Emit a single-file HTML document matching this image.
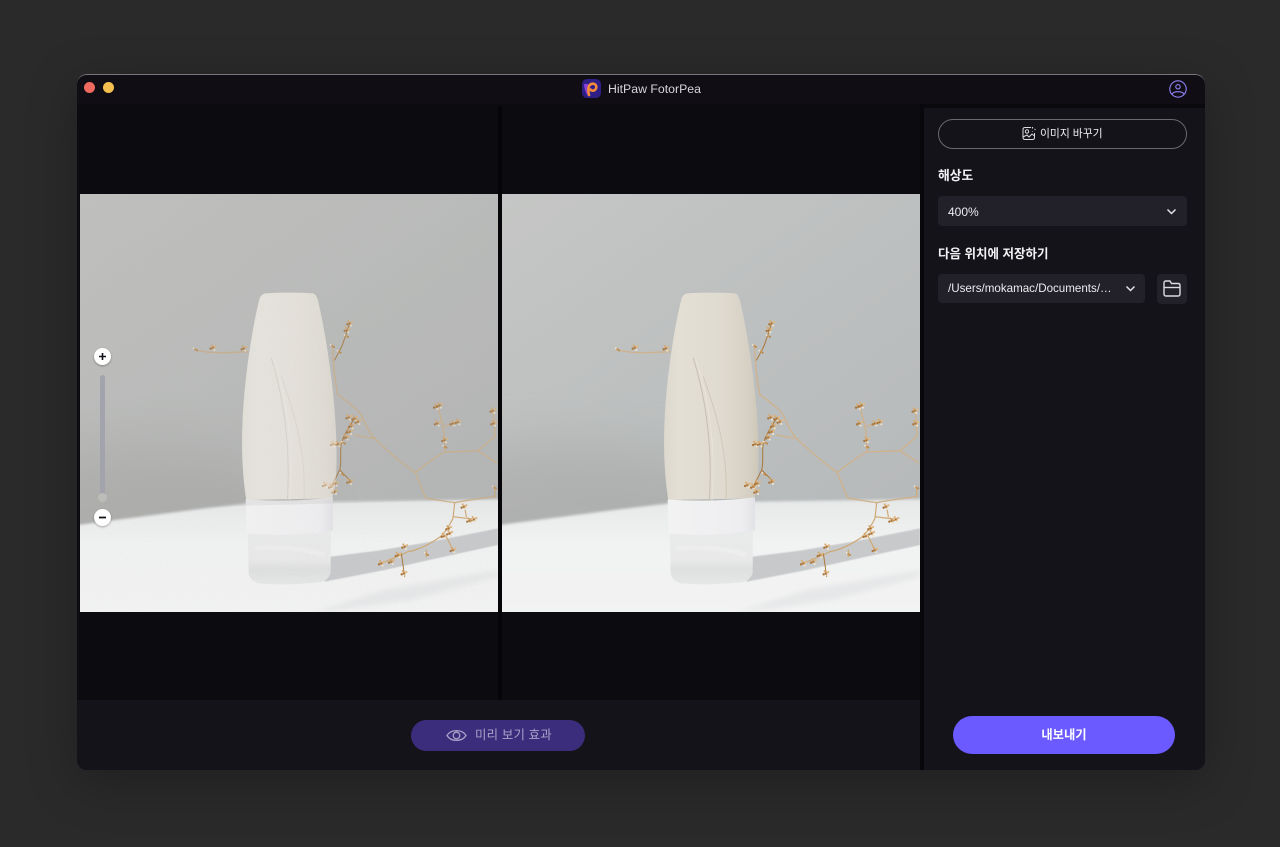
<!DOCTYPE html>
<html lang="ko"><head><meta charset="utf-8"><title>HitPaw FotorPea</title>
<style>
*{box-sizing:border-box}
html,body{margin:0;width:1280px;height:847px;overflow:hidden;background:#2a2a2a;font-family:"Liberation Sans","Noto Sans CJK KR",sans-serif}
.a{position:absolute}
#win{left:77px;top:74px;width:1128px;height:696px;border-radius:10px;background:#100e14;box-shadow:0 12px 50px rgba(0,0,0,.25);overflow:hidden}
#edge{left:77px;top:74px;width:1128px;height:12px;border-radius:10px 10px 0 0;border-top:1px solid #77767a}
.t{color:#fff;white-space:nowrap;line-height:1}
.box{background:#22212a;border-radius:4px}
</style></head><body>
<div class="a" id="win"></div><div class="a" id="edge"></div>
<div class="a" style="left:77px;top:104px;width:1128px;height:4px;background:#09090e"></div>
<div class="a" style="left:77px;top:104px;width:843px;height:596px;background:#0b0b10"></div>
<div class="a" style="left:498px;top:106px;width:4px;height:594px;background:#060609"></div>
<div class="a" style="left:77px;top:700px;width:843px;height:70px;background:#14131a;border-radius:0 0 0 10px"></div>
<div class="a" style="left:920px;top:104px;width:4px;height:666px;background:#08080c"></div>
<div class="a" style="left:924px;top:108px;width:281px;height:662px;background:#14131a;border-radius:0 0 10px 0"></div>
<div class="a" style="left:84px;top:82px;width:11px;height:11px;border-radius:50%;background:#ee6a5f"></div>
<div class="a" style="left:103px;top:82px;width:11px;height:11px;border-radius:50%;background:#f5bf4f"></div>
<svg class="a" style="left:582px;top:79px" width="19" height="19" viewBox="0 0 19 19"><rect width="19" height="19" rx="5" fill="#2e1f86"/><path d="M2 5Q2 11 6 17L8 16Q5 10 6 5Z" fill="#8a3fd8"/><path d="M7 16C5.500 9 6.500 5 10.800 4.700C15 4.700 15.500 10 11.800 11.500C10.300 12 9 11.500 8.500 10.500" fill="none" stroke="#f58a3a" stroke-width="2.600" stroke-linecap="round"/></svg>
<div class="a t" style="left:608px;top:83px;font-size:12.300px;color:#d7d6dc">HitPaw FotorPea</div>
<svg class="a" style="left:1169px;top:80px" width="18" height="18" viewBox="0 0 18 18" fill="none" stroke="#8f83f5" stroke-width="1.100"><circle cx="9" cy="9" r="8.200"/><circle cx="9" cy="6.800" r="2.200"/><path d="M3 14.500C3.500 10.800 14.500 10.800 15 14.500"/></svg>

<svg width="0" height="0" style="position:absolute"><defs>
<linearGradient id="wall" x1="0" y1="0" x2=".7" y2="1"><stop offset="0" stop-color="#c5c6c5"/><stop offset=".55" stop-color="#bcbfbf"/><stop offset="1" stop-color="#b6b9ba"/></linearGradient>
<linearGradient id="table" x1="0" y1="0" x2="0" y2="1"><stop offset="0" stop-color="#e6e7e7"/><stop offset=".35" stop-color="#f1f2f2"/><stop offset="1" stop-color="#f3f3f3"/></linearGradient>
<linearGradient id="bottle" x1="0" y1="0" x2="1" y2="0"><stop offset="0" stop-color="#dcd8cd"/><stop offset=".15" stop-color="#e3dfd5"/><stop offset=".6" stop-color="#e0dbd0"/><stop offset=".9" stop-color="#d6d0c4"/><stop offset="1" stop-color="#cdc7ba"/></linearGradient>
<linearGradient id="band" x1="0" y1="0" x2="1" y2="0"><stop offset="0" stop-color="#f2f2f3"/><stop offset=".85" stop-color="#eeeef0"/><stop offset="1" stop-color="#e2e2e6"/></linearGradient>
<linearGradient id="base" x1="0" y1="0" x2="0" y2="1"><stop offset="0" stop-color="#e9eaea"/><stop offset=".55" stop-color="#e8e9e8"/><stop offset=".72" stop-color="#dedfdf"/><stop offset="1" stop-color="#e6e7e7"/></linearGradient>
<filter id="b1" x="-10%" y="-10%" width="120%" height="120%"><feGaussianBlur stdDeviation="1.200"/></filter>
<filter id="b2" x="-20%" y="-20%" width="140%" height="140%"><feGaussianBlur stdDeviation="2.500"/></filter>
<filter id="b8" x="-30%" y="-30%" width="160%" height="160%"><feGaussianBlur stdDeviation="8"/></filter>
<filter id="b25" x="-50%" y="-50%" width="200%" height="200%"><feGaussianBlur stdDeviation="28"/></filter>
<filter id="grain" x="0" y="0" width="100%" height="100%"><feTurbulence type="fractalNoise" baseFrequency=".8" numOctaves="2" seed="3"/><feColorMatrix values="0 0 0 0 .4  0 0 0 0 .4  0 0 0 0 .38  .4 0 0 0 -.12"/></filter>
<clipPath id="wc"><rect width="418" height="418"/></clipPath>
<g id="k"><circle r="4.500" fill="#c9965a"/><circle cx="7" cy="-4" r="3.500" fill="#e0b984"/><circle cx="-7" cy="3" r="3.500" fill="#a9753a"/><circle cx="4" cy="7" r="3.200" fill="#efe3cd"/><circle cx="-4" cy="-7" r="3" fill="#d9a96c"/><circle cx="-1" cy="1" r="1.500" fill="#7c5528"/></g>
<g id="m"><circle r="3.500" fill="#c9965a"/><circle cx="-5" cy="-3" r="2.600" fill="#f2e8d6"/><circle cx="5" cy="3" r="3" fill="#b98644"/></g>
<path id="bp" d="M262 40Q330 36 405 40Q415 42 420 62C445 170 470 330 475 480C477 560 475 620 462 655L205 660C195 600 190 520 193 440C197 300 225 130 245 55Q250 42 262 40Z"/>
<g id="scene" clip-path="url(#wc)">
<rect width="418" height="418" fill="url(#wall)"/>
<ellipse cx="60" cy="320" rx="170" ry="70" fill="#9d9d9b" opacity=".42" filter="url(#b25)"/>
<path d="M-10 332L120 315L170 309L430 305V430H-10Z" fill="url(#table)" filter="url(#b1)"/>
<g transform="translate(98 86) scale(.33333)">
<path d="M440 832L600 812L760 785L960 745V795L800 830L620 870L440 905Z" fill="#c8c9cb" filter="url(#b1)"/>
<path d="M620 930L960 870V890L700 960L400 1000Z" fill="#e6e7e8" filter="url(#b8)"/>
<use href="#bp" fill="url(#bottle)"/>
<g fill="none" stroke-linecap="round">
<path d="M280 235C310 330 340 480 328 660" stroke="#c6c0b1" stroke-width="3"/>
<path d="M310 290C350 400 385 520 378 660" stroke="#cfc9bb" stroke-width="3"/>
<path d="M288 240C320 335 350 480 336 660" stroke="#e9e5dc" stroke-width="2.500"/>
</g>
<path d="M203 658Q330 668 465 652V752Q330 772 206 760Z" fill="url(#band)"/>
<path d="M210 760Q330 772 459 752L458 880Q450 900 430 906Q330 918 240 910Q215 900 212 880Z" fill="url(#base)"/>
<path d="M230 805Q340 795 440 825" stroke="#f4f4f4" stroke-width="14" fill="none" opacity=".4" filter="url(#b2)"/>
<g fill="none" stroke-linecap="round" stroke-linejoin="round">
<path d="M48 208C90 222 150 218 210 215M464 195C465 250 470 300 480 345C510 365 535 385 550 405C565 440 575 460 590 475C630 515 680 555 712 578C725 610 735 640 745 655C780 660 805 665 830 668C870 660 910 655 950 650M530 465L585 475M712 578C745 550 775 530 800 515C840 515 870 514 900 512C920 495 935 482 950 470M900 512L955 548M800 515C802 490 800 465 795 440L780 380M795 440L840 428M945 395C950 420 950 450 950 470" stroke="#cfb28c" stroke-width="4"/>
<path d="M830 668L825 715C810 745 795 765 780 775C750 795 720 810 690 815C660 830 630 842 605 852M825 710L890 718M860 680L865 710M805 770L825 810M745 810V830M950 625V650" stroke="#cda873" stroke-width="3.500"/>
<path d="M470 240C480 220 490 205 495 190L515 130M530 415C510 445 495 470 490 490C485 520 492 545 485 570L460 620M485 570L520 605M670 820L680 890" stroke="#a9783a" stroke-width="3"/>
</g>
<use href="#m" x="52" y="208"/><use href="#k" x="105" y="203"/><use href="#k" x="198" y="205"/>
<use href="#k" x="515" y="130"/><use href="#k" x="507" y="150"/><use href="#m" x="505" y="168"/><use href="#m" x="463" y="198"/><use href="#m" x="483" y="215"/>
<use href="#k" x="530" y="415"/><use href="#k" x="512" y="412"/><use href="#k" x="540" y="425"/><use href="#k" x="520" y="438"/><use href="#k" x="515" y="455"/><use href="#k" x="505" y="472"/><use href="#k" x="480" y="492"/><use href="#k" x="466" y="492"/><use href="#m" x="496" y="488"/><use href="#k" x="460" y="620"/><use href="#k" x="442" y="615"/><use href="#k" x="470" y="635"/><use href="#k" x="472" y="610"/><use href="#k" x="515" y="605"/><use href="#m" x="492" y="582"/>
<use href="#k" x="775" y="380"/><use href="#k" x="785" y="376"/><use href="#k" x="778" y="430"/><use href="#k" x="825" y="430"/><use href="#k" x="840" y="426"/><use href="#k" x="800" y="480"/><use href="#m" x="800" y="500"/><use href="#k" x="945" y="392"/><use href="#k" x="947" y="430"/><use href="#m" x="949" y="622"/>
<use href="#k" x="858" y="680"/><use href="#k" x="888" y="718"/><use href="#k" x="875" y="722"/><use href="#k" x="812" y="745"/><use href="#k" x="798" y="768"/><use href="#k" x="815" y="760"/><use href="#k" x="825" y="810"/><use href="#k" x="680" y="800"/><use href="#k" x="660" y="825"/><use href="#k" x="640" y="845"/><use href="#k" x="610" y="850"/><use href="#k" x="678" y="880"/><use href="#m" x="745" y="822"/>
</g>
</g>
</defs></svg>

<svg class="a" style="left:80px;top:194px" width="418" height="418" viewBox="0 0 418 418"><use href="#scene"/><path d="M0 0H418V305L120 313L0 330Z" fill="#a7a49c" opacity=".16"/><g transform="translate(98 86) scale(.33333)"><use href="#bp" fill="#fff" opacity=".35"/></g><rect width="418" height="418" filter="url(#grain)" opacity=".35"/></svg>
<svg class="a" style="left:502px;top:194px" width="418" height="418" viewBox="0 0 418 418"><use href="#scene"/></svg>

<div class="a" style="left:100px;top:375px;width:5px;height:125px;background:#a3a3ad;border-radius:3px"></div>
<div class="a" style="left:98px;top:493px;width:9px;height:9px;background:#bcbcb8;border-radius:50%"></div>
<div class="a" style="left:94px;top:348px;width:17px;height:17px;background:#fff;border-radius:50%;box-shadow:0 1px 2px rgba(0,0,0,.3)"></div>
<svg class="a" style="left:94px;top:348px" width="17" height="17"><path d="M5 8.500H12M8.500 5V12" stroke="#15141a" stroke-width="1.600"/></svg>
<div class="a" style="left:94px;top:509px;width:17px;height:17px;background:#fff;border-radius:50%;box-shadow:0 1px 2px rgba(0,0,0,.3)"></div>
<svg class="a" style="left:94px;top:509px" width="17" height="17"><path d="M5 8.500H12" stroke="#15141a" stroke-width="1.800"/></svg>

<div class="a" style="left:411px;top:720px;width:174px;height:31px;border-radius:16px;background:#3b2c7c"></div>
<svg class="a" style="left:446px;top:727px" width="21" height="17" viewBox="0 0 21 17" fill="none" stroke="#a9a3c9" stroke-width="1.300"><path d="M1 8.500C5 2 16 2 20 8.500C16 15 5 15 1 8.500Z"/><circle cx="10.500" cy="8.500" r="3.300"/></svg>
<div class="a t" style="left:475px;top:729px;font-size:12.400px;color:#a9a3c9;letter-spacing:.2px">미리 보기 효과</div>

<div class="a" style="left:938px;top:119px;width:249px;height:30px;border:1px solid #6a696f;border-radius:15px"></div>
<svg class="a" style="left:1022px;top:126px" width="14" height="15" viewBox="0 0 14 15" fill="none" stroke="#dddce0" stroke-width="1"><path d="M9 1.500H3Q1 1.500 1 3.500V11.500Q1 13.500 3 13.500H10.500Q12.500 13.500 12.500 11.500V7"/><circle cx="5" cy="5.500" r="1.700"/><path d="M1 11L5 9L7 11L10 8L12.500 10"/><path d="M10.500 1V2.500M12.500 3.500H13.500M10.500 5V5.500" stroke-width="1.200"/></svg>
<div class="a t" style="left:1040px;top:129px;font-size:10.800px;color:#f0f0f2">이미지 바꾸기</div>
<div class="a t" style="left:938px;top:170px;font-size:12.800px;font-weight:700;color:#f3f3f5">해상도</div>
<div class="a box" style="left:938px;top:196px;width:249px;height:30px"></div>
<div class="a t" style="left:948px;top:206px;font-size:12px;color:#ecebef">400%</div>
<svg class="a" style="left:1166px;top:208px" width="11" height="8" fill="none" stroke="#e3e2e6" stroke-width="1.500"><path d="M1.500 1.500L5.500 5.500L9.500 1.500"/></svg>
<div class="a t" style="left:938px;top:247.500px;font-size:12.500px;font-weight:700;color:#f3f3f5">다음 위치에 저장하기</div>
<div class="a box" style="left:938px;top:274px;width:207px;height:29px"></div>
<div class="a t" style="left:948px;top:283px;font-size:11.600px;color:#ecebef">/Users/mokamac/Documents/…</div>
<svg class="a" style="left:1125px;top:285px" width="11" height="8" fill="none" stroke="#e3e2e6" stroke-width="1.500"><path d="M1.500 1.500L5.500 5.500L9.500 1.500"/></svg>
<div class="a box" style="left:1157px;top:274px;width:30px;height:30px"></div>
<svg class="a" style="left:1163px;top:280px" width="18" height="17" viewBox="0 0 18 17" fill="none" stroke="#dcdbe0" stroke-width="1.400"><path d="M1 3Q1 1 3 1H7L8.500 3.500H15Q17 3.500 17 5.500V14Q17 16 15 16H3Q1 16 1 14Z"/><path d="M1 7.500H17"/></svg>

<div class="a" style="left:953px;top:716px;width:222px;height:38px;border-radius:19px;background:#6a5aff"></div>
<div class="a t" style="left:953px;top:729px;width:222px;text-align:center;font-size:12.300px;font-weight:700">내보내기</div>
</body></html>
